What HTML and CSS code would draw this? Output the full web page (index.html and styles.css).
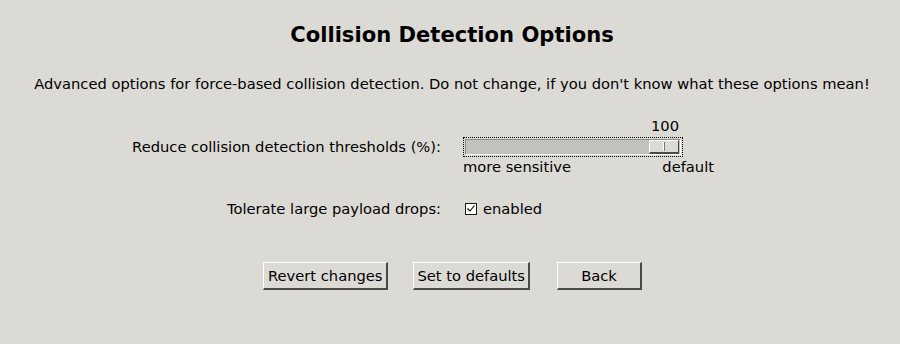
FILE: index.html
```html
<!DOCTYPE html>
<html>
<head>
<meta charset="utf-8">
<link rel="stylesheet" href="styles.css">
</head>
<body>
<div class="page">
  <h1 class="title">Collision Detection Options</h1>
  <p class="desc">Advanced options for force-based collision detection. Do not change, if you don't know what these options mean!</p>
  <div class="form">
    <div class="label label-slider">Reduce collision detection thresholds (%):</div>
    <div class="slider-block">
      <div class="value">100</div>
      <div class="focus">
        <div class="trough">
          <div class="handle"><span class="grip"></span></div>
        </div>
      </div>
      <div class="ends"><span>more sensitive</span><span>default</span></div>
    </div>
    <div class="label label-check">Tolerate large payload drops:</div>
    <label class="check">
      <span class="box"><svg width="10" height="9" viewBox="0 0 10 9"><path d="M1.5 4.5 L4 7 L8.5 1.5" fill="none" stroke="#000" stroke-width="1.1"/></svg></span>
      <span>enabled</span>
    </label>
  </div>
  <div class="buttons">
    <button class="btn">Revert changes</button>
    <button class="btn btn-narrow">Set to defaults</button>
    <button class="btn btn-back">Back</button>
  </div>
</div>
</body>
</html>
```
FILE: styles.css
```css
html, body {
  margin: 0;
  padding: 0;
  background: #dcdad5;
}
body {
  width: 900px;
  height: 344px;
  overflow: hidden;
  font-family: "DejaVu Sans", sans-serif;
  font-size: 14.7px;
  color: #000;
}
.page {
  display: flex;
  flex-direction: column;
  padding-top: 23px;
}
.title {
  margin: 0;
  font-size: 21.1px;
  line-height: 24px;
  font-weight: bold;
  text-align: center;
  padding-left: 4px;
}
.desc {
  margin: 28px 0 0 0;
  line-height: 17px;
  text-align: center;
  padding-left: 4px;
}
.form {
  display: grid;
  grid-template-columns: 441px auto;
  column-gap: 22px;
  row-gap: 25px;
  margin-top: 25px;
}
.label {
  text-align: right;
  line-height: 17px;
}
.label-slider {
  margin-top: 21px;
}
.slider-block {
  display: flex;
  flex-direction: column;
  width: 251px;
}
.value {
  width: 220px;
  text-align: right;
  line-height: 17px;
  padding-right: 4px;
  box-sizing: border-box;
}
.focus {
  margin-top: 3px;
  width: 220px;
  height: 20px;
  box-sizing: border-box;
  border: 1px dotted #000;
  padding: 1px;
}
.trough {
  height: 16px;
  box-sizing: border-box;
  border-top: 1px solid #8e8c87;
  border-left: 1px solid #8e8c87;
  border-bottom: 1px solid #fff;
  border-right: 1px solid #fff;
  background: #c3c1bc;
  display: flex;
  justify-content: flex-end;
  padding: 0 1px 0 0;
}
.handle {
  width: 30px;
  height: 14px;
  box-sizing: border-box;
  background: #dcdad5;
  border-top: 1px solid #fff;
  border-left: 1px solid #fff;
  border-bottom: 2px solid #4a4945;
  border-right: 1px solid #4a4945;
  display: flex;
  justify-content: center;
  align-items: center;
}
.grip {
  width: 1px;
  height: 9px;
  background: #fff;
  border-right: 1px solid #7a7873;
}
.ends {
  display: flex;
  justify-content: space-between;
  line-height: 17px;
  margin-top: 1px;
}
.label-check {
  margin-top: 0;
}
.check {
  display: flex;
  align-items: center;
  gap: 6px;
  line-height: 17px;
  padding-left: 2px;
}
.box {
  width: 12px;
  height: 12px;
  box-sizing: border-box;
  border: 1px solid #1a1a1a;
  background: #fff;
  display: flex;
  align-items: center;
  justify-content: center;
}
.buttons {
  display: flex;
  justify-content: center;
  gap: 25px;
  margin-top: 45px;
  padding-left: 5px;
}
.btn {
  font-family: "DejaVu Sans", sans-serif;
  font-size: 14.7px;
  color: #000;
  background: #dcdad5;
  height: 28px;
  padding: 0 4px;
  min-width: 85px;
  box-sizing: border-box;
  border-top: 1px solid #fff;
  border-left: 1px solid #fff;
  border-bottom: 2px solid #4a4945;
  border-right: 2px solid #4a4945;
  margin: 0;
  line-height: 17px;
}
.btn-narrow {
  padding: 0 3px;
}
.btn-back {
  margin-left: 2px;
}
```
